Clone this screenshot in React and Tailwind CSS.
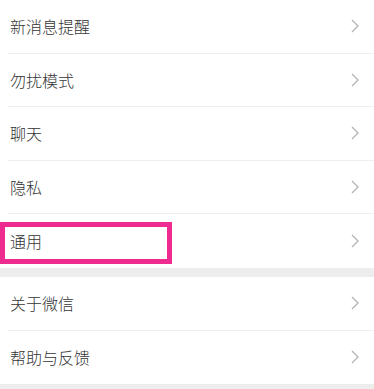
import React from "react";

const Chevron = () => (
  <svg width="8" height="14" viewBox="0 0 8 14" className="shrink-0">
    <polyline points="1,1 7,7 1,13" fill="none" stroke="#b4b4b4" strokeWidth="1.3" strokeLinejoin="miter" />
  </svg>
);

const Row = ({ label, last, children }) => (
  <div className="relative h-[53.5px] bg-white">
    <div className={`ml-[8px] h-full flex items-center justify-between pr-[15px] ${last ? "" : "border-b border-[#efefef]"}`}>
      <span className="pl-[2px] text-[16px] leading-none font-light text-[#333333]">{label}</span>
      <Chevron />
    </div>
    {children}
  </div>
);

export default function App() {
  return (
    <div
      className="w-[374px] h-[389px] overflow-hidden bg-[#ededed]"
      style={{ fontFamily: '"Noto Sans CJK SC", "Noto Sans", sans-serif' }}
    >
      <div className="bg-white">
        <Row label="新消息提醒" />
        <Row label="勿扰模式" />
        <Row label="聊天" />
        <Row label="隐私" />
        <Row label="通用" last>
          <div className="absolute left-0 top-[8px] w-[172px] h-[42px] border-[5px] border-[#ee2c8f]" />
        </Row>
      </div>
      <div className="h-[9.5px]" />
      <div className="bg-white">
        <Row label="关于微信" />
        <Row label="帮助与反馈" last />
      </div>
    </div>
  );
}
